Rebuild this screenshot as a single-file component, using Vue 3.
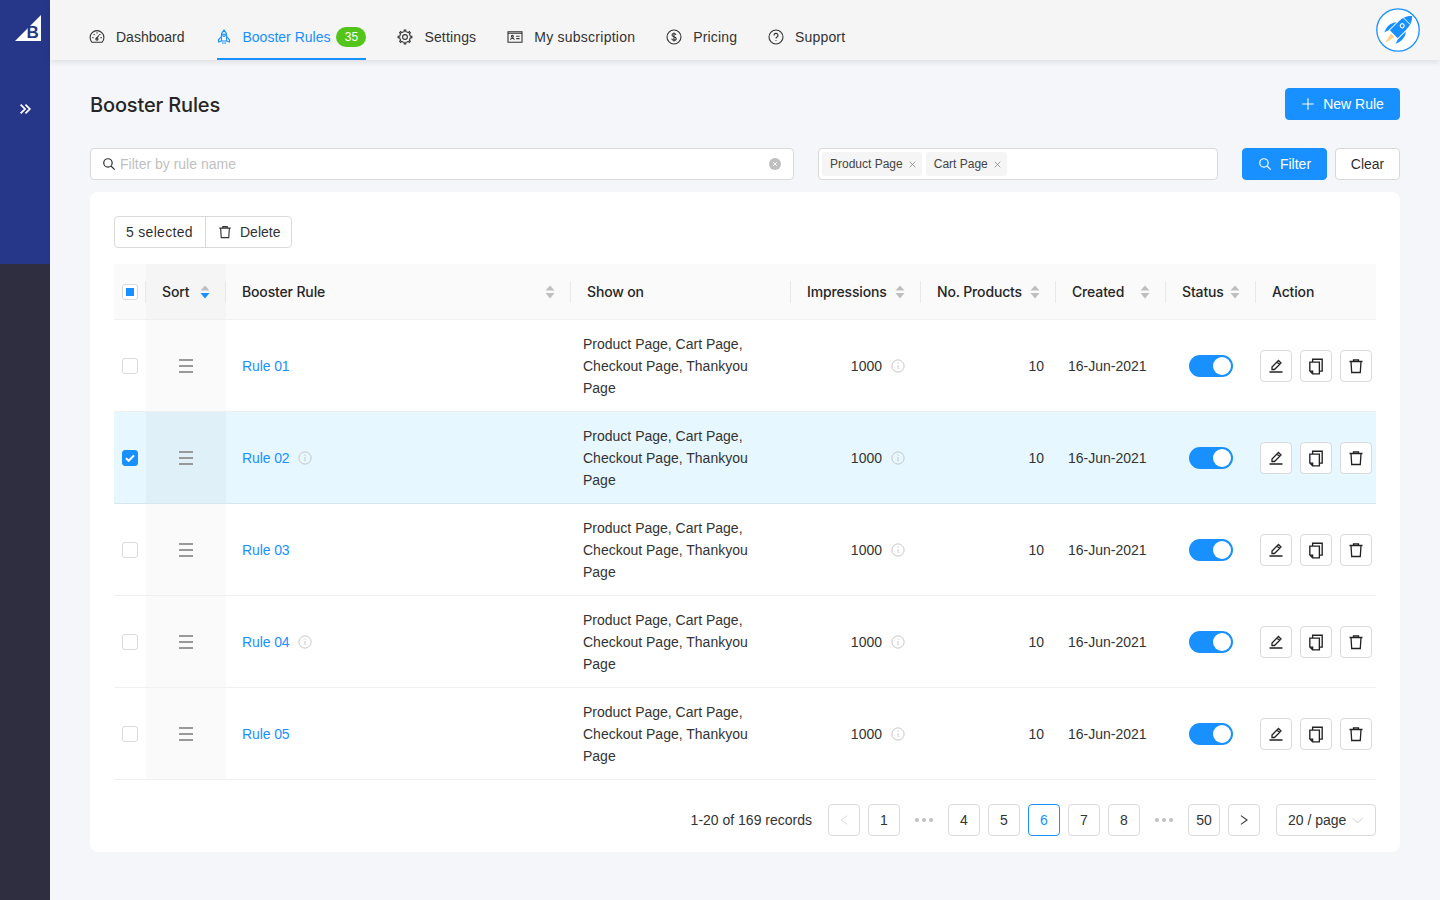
<script setup>
import { h } from 'vue'

function gearPath() {
  let d = ''
  const n = 8
  for (let i = 0; i < n; i++) {
    const a = (i / n) * Math.PI * 2
    const step = Math.PI * 2 / n
    const pts = [[a - step * 0.5, 5.3], [a - step * 0.2, 5.4], [a - step * 0.14, 6.9], [a + step * 0.14, 6.9], [a + step * 0.2, 5.4]]
    pts.forEach(([t, r], j) => {
      const x = (8 + r * Math.cos(t)).toFixed(2)
      const y = (8 + r * Math.sin(t)).toFixed(2)
      d += `${i === 0 && j === 0 ? 'M' : 'L'}${x} ${y} `
    })
  }
  return d + 'Z M10.4 8a2.4 2.4 0 1 1-4.8 0 2.4 2.4 0 0 1 4.8 0Z'
}

const paths = {
  dashboard: 'M3 13.3A6.9 6.9 0 1 1 13 13.3Z M8 3.2v1.3 M3.2 8.6h1.3 M12.8 8.6h-1.3 M4.7 5.1l.9.9 M11.3 5.1l-.9.9 M7.2 10l2.6-3.6 M9 10.2a1.1 1.1 0 1 1-2.1-.6 1.1 1.1 0 0 1 2.1.6Z',
  rocket: 'M8 1C6.2 2.8 5.4 5 5.4 7.2V12h5.2V7.2C10.6 5 9.800 2.800 8 1Z M5.400 7.500L2.500 10.800V13l2.900-1 M10.600 7.500l2.900 3.300V13l-2.900-1 M9.200 6.200a1.200 1.200 0 1 1-2.400 0 1.200 1.200 0 0 1 2.400 0Z M6.900 13.200v1.800 M9.100 13.200v1.800',
  setting: gearPath(),
  card: 'M1 2.800h14v10.400H1Z M1 4.200h14 M7.200 10.800c0-2-3.600-2-3.600 0 M6.400 7.200a1 1 0 1 1-2 0 1 1 0 0 1 2 0Z M9.200 7.200h3.400 M9.200 9.600h3.400',
  dollar: 'M15 8A7 7 0 1 1 1 8a7 7 0 0 1 14 0Z M10 6c-.2-1-1-1.500-2-1.500S6 5.100 6 6.100c0 2.300 4.200 1.200 4.200 3.600 0 1-.9 1.700-2.200 1.700s-2.100-.6-2.300-1.700 M8 3.500v9',
  question: 'M15 8A7 7 0 1 1 1 8a7 7 0 0 1 14 0Z M6 6.400A2 2 0 1 1 9 8.100c-.7.4-1 .8-1 1.500 M8 11.200v.9',
  info: 'M15 8A7 7 0 1 1 1 8a7 7 0 0 1 14 0Z M8 7v4.600 M8 4.200v1.300',
  search: 'M11.600 6.800a4.800 4.800 0 1 1-9.600 0 4.800 4.800 0 0 1 9.600 0Z M10.300 10.300l4.200 4.200',
  plus: 'M8 1.500v13 M1.500 8h13',
  trash: 'M1.500 3.500h13 M5.500 3.500V1.800h5v1.700 M3 3.500l.7 11h8.600l.7-11',
  edit: 'M1.500 14h13 M4 11.500V9l6.500-6.500L13 5l-6.500 6.500Z M9 4l2.500 2.500',
  copy: 'M5 4.500V2h8.500v10.500H11 M2.500 4.500H11V15H5l-2.500-2.500Z M2.500 12.500H5V15',
  close: 'M3 3l10 10 M13 3L3 13',
  left: 'M11.500 3L4.500 8l7 5',
  right: 'M4.500 3l7 5-7 5',
  down: 'M2 5l6 6 6-6',
  double: 'M3 3l5 5-5 5 M8.500 3l5 5-5 5'
}

const Icon = (props) => h('svg', {
  width: props.size || 14,
  height: props.size || 14,
  viewBox: '0 0 16 16',
  fill: 'none',
  stroke: 'currentColor',
  'stroke-width': props.sw || 1.3
}, [h('path', { d: paths[props.name] })])
Icon.props = ['name', 'size', 'sw']

const navItems = [
  { label: 'Dashboard', icon: 'dashboard' },
  { label: 'Booster Rules', icon: 'rocket', active: true, badge: 35 },
  { label: 'Settings', icon: 'setting', ls: 'mid' },
  { label: 'My subscription', icon: 'card', ls: 'wide' },
  { label: 'Pricing', icon: 'dollar', ls: 'mid' },
  { label: 'Support', icon: 'question', ls: 'mid' }
]

const columns = [
  { label: 'Sort', sort: 'down', cls: 'h-sort' },
  { label: 'Booster Rule', sort: 'none' },
  { label: 'Show on' },
  { label: 'Impressions', sort: 'none' },
  { label: 'No. Products', sort: 'none' },
  { label: 'Created', sort: 'none' },
  { label: 'Status', sort: 'none' },
  { label: 'Action' }
]

const rows = [
  { name: 'Rule 01' },
  { name: 'Rule 02', info: true, selected: true },
  { name: 'Rule 03' },
  { name: 'Rule 04', info: true },
  { name: 'Rule 05' }
]

const pages = ['1', '…', '4', '5', '6', '7', '8', '…', '50']
</script>

<template>
  <div class="app">
    <aside class="side">
      <div class="side-top">
        <svg class="logo" width="26" height="26" viewBox="0 0 26 26">
          <polygon points="26,0 26,26 0,26" fill="#fff" />
          <text x="11.500" y="23" class="logo-b">B</text>
        </svg>
        <Icon class="expand" name="double" :size="14" :sw="2" />
      </div>
    </aside>

    <div class="body">
      <header class="nav">
        <nav class="nav-list">
          <a v-for="item in navItems" :key="item.label" class="nav-item" :class="{ active: item.active }">
            <Icon :name="item.icon" :size="16" :sw="1.100" />
            <span class="nav-label" :class="item.ls">{{ item.label }}</span>
            <span v-if="item.badge" class="badge">{{ item.badge }}</span>
          </a>
        </nav>
        <div class="avatar">
          <svg width="44" height="44" viewBox="0 0 44 44">
            <circle cx="22" cy="22" r="21.200" fill="#fff" stroke="#1890ff" stroke-width="1.300" />
            <g transform="rotate(45 22 22)">
              <path d="M22 2.200C26.500 6 27.500 11 27.500 16V28H16.500V16C16.500 11 17.500 6 22 2.200Z" fill="#1890ff" />
              <path d="M15.500 17.500C12 21 11 27 14 33.500C14.800 30.500 15.500 29.500 15.500 28.500Z M28.500 17.500C32 21 33 27 30 33.500C29.200 30.500 28.500 29.500 28.500 28.500Z" fill="#1890ff" />
              <path d="M17 9.500H27" stroke="#fff" stroke-width="0.900" />
              <circle cx="22" cy="16" r="2" fill="#1890ff" stroke="#fff" stroke-width="1.100" />
              <path d="M19.500 29.500h5l-1 5-1.500 5.500-1.500-5.500Z" fill="#fbd38d" />
            </g>
          </svg>
        </div>
      </header>

      <main class="main">
        <div class="title-row">
          <h1 class="title">Booster Rules</h1>
          <button class="btn primary new"><Icon name="plus" :size="14" :sw="1.200" />New Rule</button>
        </div>

        <div class="filters">
          <div class="field search">
            <Icon class="search-icon" name="search" :size="14" :sw="1.400" />
            <input class="search-input" placeholder="Filter by rule name" />
            <span class="clear-dot"><Icon name="close" :size="6" :sw="2.400" /></span>
          </div>
          <div class="field tags">
            <span class="tag">Product Page<Icon name="close" :size="9" :sw="1.200" /></span>
            <span class="tag">Cart Page<Icon name="close" :size="9" :sw="1.200" /></span>
          </div>
          <button class="btn primary filter"><Icon name="search" :size="14" :sw="1.400" />Filter</button>
          <button class="btn clear">Clear</button>
        </div>

        <section class="card">
          <div class="bulk">
            <span class="bulk-count">5 selected</span>
            <span class="bulk-del"><Icon name="trash" :size="14" :sw="1.300" />Delete</span>
          </div>

          <div class="table">
            <div class="grid head">
              <div class="cell check-cell"><span class="check partial"></span></div>
              <div v-for="col in columns" :key="col.label" class="cell th" :class="col.cls">
                <span>{{ col.label }}</span>
                <svg v-if="col.sort" class="sorter" width="10" height="14" viewBox="0 0 10 14">
                  <path d="M5 0.500L9.500 5.500H0.500Z" fill="#bfbfbf" />
                  <path d="M0.500 8H9.500L5 13.500Z" :fill="col.sort === 'down' ? '#1890ff' : '#bfbfbf'" />
                </svg>
              </div>
            </div>

            <div v-for="row in rows" :key="row.name" class="grid row" :class="{ selected: row.selected }">
              <div class="cell check-cell">
                <span class="check" :class="{ checked: row.selected }">
                  <svg v-if="row.selected" width="16" height="16" viewBox="0 0 16 16"><path d="M4 8.200l2.700 2.600L12 5.400" fill="none" stroke="#fff" stroke-width="2" /></svg>
                </span>
              </div>
              <div class="cell drag"><span class="bars"><i></i><i></i><i></i></span></div>
              <div class="cell rule">
                <a class="link">{{ row.name }}</a>
                <Icon v-if="row.info" class="info" name="info" :size="14" :sw="1" />
              </div>
              <div class="cell show">Product Page, Cart Page, Checkout Page, Thankyou Page</div>
              <div class="cell impressions">1000<Icon class="info" name="info" :size="14" :sw="1" /></div>
              <div class="cell products">10</div>
              <div class="cell created">16-Jun-2021</div>
              <div class="cell status"><span class="switch"><i></i></span></div>
              <div class="cell actions">
                <button class="act"><Icon name="edit" :size="16" :sw="1.300" /></button>
                <button class="act"><Icon name="copy" :size="18" :sw="1.200" /></button>
                <button class="act"><Icon name="trash" :size="16" :sw="1.300" /></button>
              </div>
            </div>
          </div>

          <div class="pager">
            <span class="records">1-20 of 169 records</span>
            <span class="pg disabled"><Icon name="left" :size="14" :sw="1.100" /></span>
            <template v-for="(p, i) in pages" :key="i">
              <span v-if="p === '…'" class="dots"><i></i><i></i><i></i></span>
              <span v-else class="pg" :class="{ current: p === '6' }">{{ p }}</span>
            </template>
            <span class="pg"><Icon name="right" :size="14" :sw="1.200" /></span>
            <span class="size"><span class="size-text">20 / page</span><Icon name="down" :size="13" :sw="1" /></span>
          </div>
        </section>
      </main>
    </div>
  </div>
</template>

<style>
html, body { margin: 0; padding: 0; background: #f5f6fa; }
</style>

<style scoped>
* { box-sizing: border-box; }
.app {
  display: flex;
  width: 1440px;
  height: 900px;
  overflow: hidden;
  font-family: "Liberation Sans", Arial, sans-serif;
  font-size: 14px;
  color: rgba(0, 0, 0, 0.85);
}
.side { width: 50px; flex: none; background: #2f2e41; }
.side-top {
  height: 264px;
  background: #26378a;
  display: flex;
  flex-direction: column;
  align-items: center;
  padding-top: 15px;
}
.logo { margin-left: 6px; }
.logo-b { font: bold 17px "Liberation Sans", Arial, sans-serif; fill: #26378a; }
.expand { color: #fff; margin-top: 61px; }

.body { flex: 1; min-width: 0; display: flex; flex-direction: column; }
.nav {
  height: 60px;
  flex: none;
  background: #f5f5f5;
  box-shadow: 0 2px 6px rgba(0, 0, 0, 0.1);
  display: flex;
  justify-content: space-between;
  padding: 0 20px 0 40px;
  position: relative;
}
.nav-list { display: flex; gap: 32px; }
.nav-item {
  display: flex;
  align-items: center;
  height: 60px;
  padding-top: 16px;
  border-bottom: 2px solid transparent;
  color: #333;
  white-space: nowrap;
}
.nav-item svg { margin: 0 11px 0 -1px; }
.nav-label.mid { letter-spacing: 0.15px; }
.nav-label.wide { letter-spacing: 0.25px; }
.nav-item.active { color: #1890ff; border-bottom-color: #1890ff; }
.badge {
  margin-left: 6px;
  width: 30px;
  height: 20px;
  border-radius: 10px;
  background: #52c41a;
  color: #fff;
  font-size: 12px;
  line-height: 20px;
  text-align: center;
}
.avatar { display: flex; align-items: center; }
.avatar svg { display: block; }

.main { flex: 1; padding: 28px 40px 0; }
.title-row { display: flex; justify-content: space-between; align-items: center; height: 32px; }
.title {
  margin: 2px 0 0;
  font-family: Inter, "Liberation Sans", sans-serif;
  font-size: 20px;
  font-weight: 500;
  letter-spacing: -0.15px;
  color: #262626;
}
.btn {
  display: inline-flex;
  align-items: center;
  justify-content: center;
  height: 32px;
  border-radius: 4px;
  font: inherit;
  border: 1px solid #d9d9d9;
  background: #fff;
  color: rgba(0, 0, 0, 0.85);
  padding: 0;
}
.btn.primary { background: #1890ff; border-color: #1890ff; color: #fff; gap: 8px; }
.new { width: 115px; }
.filters { display: flex; margin-top: 28px; height: 32px; }
.field {
  height: 32px;
  background: #fff;
  border: 1px solid #d9d9d9;
  border-radius: 4px;
  display: flex;
  align-items: center;
}
.search { width: 704px; padding: 0 12px 0 11px; }
.search-icon { flex: none; color: #333; margin-right: 4px; }
.search-input {
  flex: 1;
  min-width: 0;
  border: 0;
  outline: 0;
  padding: 0;
  font: inherit;
  background: transparent;
}
.search-input::placeholder { color: #bfbfbf; }
.clear-dot {
  width: 12px;
  height: 12px;
  border-radius: 50%;
  background: #bfbfbf;
  color: #fff;
  display: flex;
  align-items: center;
  justify-content: center;
}
.tags { width: 400px; margin-left: 24px; padding-left: 3px; gap: 4px; }
.tag {
  display: flex;
  align-items: center;
  height: 24px;
  padding: 0 5px 0 8px;
  gap: 5px;
  background: #f5f5f5;
  border-radius: 3px;
  font-size: 12px;
  color: #444;
  white-space: nowrap;
}
.tag svg { color: #777; }
.filter { width: 85px; margin-left: 24px; }
.clear { width: 65px; margin-left: 8px; }

.card {
  margin-top: 12px;
  height: 660px;
  background: #fff;
  border-radius: 8px;
  padding: 24px;
}
.bulk {
  display: inline-flex;
  height: 32px;
  width: 178px;
  border: 1px solid #d9d9d9;
  border-radius: 4px;
  align-items: center;
  vertical-align: top;
}
.bulk-count { width: 91px; padding-left: 11px; height: 100%; line-height: 30px; border-right: 1px solid #d9d9d9; white-space: nowrap; letter-spacing: 0.3px; }
.bulk-del { display: flex; align-items: center; gap: 8px; padding-left: 12px; color: #333; }

.table { margin-top: 16px; }
.grid {
  display: grid;
  grid-template-columns: 32px 80px 345px 220px 130px 135px 110px 90px 120px;
}
.cell { display: flex; align-items: center; min-width: 0; }
.head { height: 56px; background: #fafafa; border-bottom: 1px solid #f0f0f0; }
.th {
  position: relative;
  justify-content: space-between;
  padding: 0 16px;
  font-family: Inter, "Liberation Sans", sans-serif;
  font-size: 14px;
  font-weight: 500;
  letter-spacing: -0.15px;
  color: #262626;
  white-space: nowrap;
}
.th::before {
  content: "";
  position: absolute;
  left: -1px;
  top: 17px;
  height: 22px;
  width: 1px;
  background: #e8e8e8;
}
.h-sort { background: #f5f5f5; }
.sorter { flex: none; }
.check-cell { justify-content: center; }
.check {
  width: 16px;
  height: 16px;
  border: 1px solid #d9d9d9;
  border-radius: 3px;
  background: #fff;
  position: relative;
  display: block;
}
.check.partial::after {
  content: "";
  position: absolute;
  left: 3px;
  top: 3px;
  width: 8px;
  height: 8px;
  background: #1890ff;
}
.check.checked { background: #1890ff; border-color: #1890ff; }
.check.checked svg { position: absolute; left: -1px; top: -1px; display: block; }

.row { height: 92px; border-bottom: 1px solid #f0f0f0; }
.row.selected { background: #e6f7ff; border-bottom-color: #d5e7f0; }
.drag { justify-content: center; background: #fafafa; }
.selected .drag { background: #dff0f9; }
.bars { display: flex; flex-direction: column; gap: 4px; width: 14px; }
.bars i { display: block; height: 2px; background: #999; }
.rule { padding-left: 16px; gap: 8px; }
.link { color: #1890ff; letter-spacing: -0.1px; }
.info { color: #bfbfbf; flex: none; }
.show { padding: 0 30px 0 12px; line-height: 22px; color: #333; }
.impressions { justify-content: flex-end; padding-right: 16px; gap: 9px; color: #333; }
.products { justify-content: flex-end; padding-right: 12px; color: #333; }
.created { padding-left: 12px; color: #333; white-space: nowrap; }
.status { justify-content: center; }
.switch { width: 44px; height: 22px; border-radius: 11px; background: #1890ff; position: relative; display: block; }
.switch i { position: absolute; right: 2px; top: 2px; width: 18px; height: 18px; border-radius: 50%; background: #fff; }
.actions { padding-left: 4px; gap: 8px; }
.act {
  width: 32px;
  height: 32px;
  padding: 0;
  background: #fff;
  border: 1px solid #d9d9d9;
  border-radius: 4px;
  display: flex;
  align-items: center;
  justify-content: center;
  color: #222;
}

.pager { display: flex; align-items: center; justify-content: flex-end; gap: 8px; margin-top: 24px; height: 32px; }
.records { margin-right: 8px; color: #333; }
.pg {
  width: 32px;
  height: 32px;
  border: 1px solid #d9d9d9;
  border-radius: 4px;
  display: flex;
  align-items: center;
  justify-content: center;
  color: #333;
}
.pg.disabled { color: #d9d9d9; }
.pg.current { border-color: #1890ff; color: #1890ff; }
.dots { width: 32px; display: flex; justify-content: center; gap: 3px; }
.dots i { width: 4px; height: 4px; border-radius: 50%; background: #bfbfbf; }
.size {
  width: 100px;
  height: 32px;
  margin-left: 8px;
  border: 1px solid #d9d9d9;
  border-radius: 4px;
  display: flex;
  align-items: center;
  justify-content: space-between;
  padding: 0 11px;
  color: #333;
}
.size-text { white-space: nowrap; }
.size svg { color: #bfbfbf; flex: none; }
</style>
